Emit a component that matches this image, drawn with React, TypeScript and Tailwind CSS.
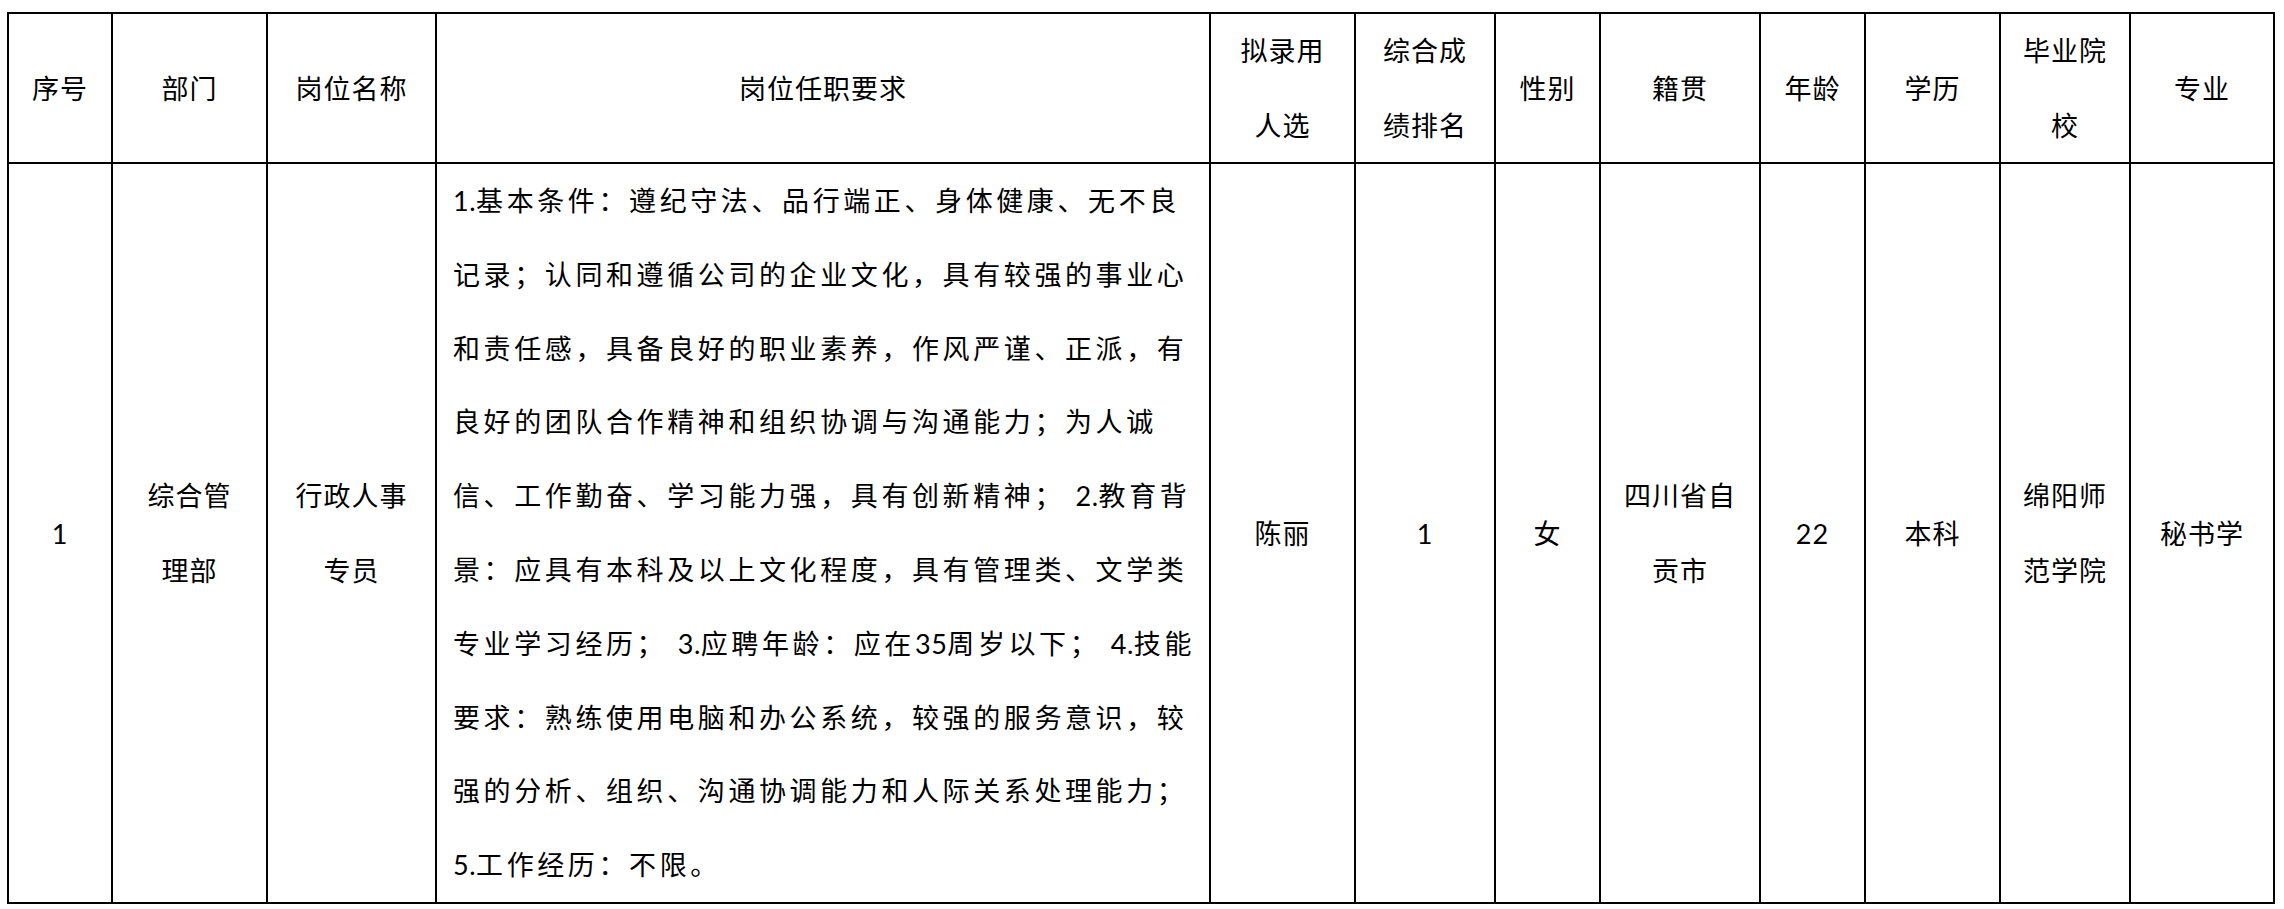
const font = {
  fontFamily: '"Lato", "Noto Sans CJK SC", sans-serif',
};

const headers: string[][] = [
  ["序号"],
  ["部门"],
  ["岗位名称"],
  ["岗位任职要求"],
  ["拟录用", "人选"],
  ["综合成", "绩排名"],
  ["性别"],
  ["籍贯"],
  ["年龄"],
  ["学历"],
  ["毕业院", "校"],
  ["专业"],
];

const requirement = [
  "1.基本条件：遵纪守法、品行端正、身体健康、无不良",
  "记录；认同和遵循公司的企业文化，具有较强的事业心",
  "和责任感，具备良好的职业素养，作风严谨、正派，有",
  "良好的团队合作精神和组织协调与沟通能力；为人诚",
  "信、工作勤奋、学习能力强，具有创新精神； 2.教育背",
  "景：应具有本科及以上文化程度，具有管理类、文学类",
  "专业学习经历； 3.应聘年龄：应在35周岁以下； 4.技能",
  "要求：熟练使用电脑和办公系统，较强的服务意识，较",
  "强的分析、组织、沟通协调能力和人际关系处理能力；",
  "5.工作经历：不限。",
];

const row: string[][] = [
  ["1"],
  ["综合管", "理部"],
  ["行政人事", "专员"],
  [],
  ["陈丽"],
  ["1"],
  ["女"],
  ["四川省自", "贡市"],
  ["22"],
  ["本科"],
  ["绵阳师", "范学院"],
  ["秘书学"],
];

// digits and dots stay tight, like the narrow latin face in the original doc
function Line({ text }: { text: string }) {
  const parts = text.split(/([0-9.]+)/);
  return (
    <div className="whitespace-nowrap">
      {parts.map((p, i) =>
        /^[0-9.]+$/.test(p) ? (
          <span key={i} className="tracking-[0.5px]">
            {p}
          </span>
        ) : (
          <span key={i}>{p}</span>
        )
      )}
    </div>
  );
}

function Cell({ lines }: { lines: string[] }) {
  return (
    <div className="flex items-center justify-center bg-white text-center">
      <div className="leading-[75px]">
        {lines.map((l, i) => (
          <div key={i} className="whitespace-nowrap">
            {l}
          </div>
        ))}
      </div>
    </div>
  );
}

export default function App() {
  return (
    <div className="min-h-screen bg-white pt-[12px] pl-[7px] text-black" style={font}>
      <div className="grid w-[2268px] grid-cols-[102px_153px_167px_772px_143px_138px_103px_158px_103px_133px_128px_142px] grid-rows-[148px_738px] gap-[2px] bg-black p-[2px] text-[27px] tracking-[1px]">
        {headers.map((h, i) => (
          <Cell key={i} lines={h} />
        ))}
        {row.map((r, i) =>
          i === 3 ? (
            <div key={i} className="bg-white pl-[16px] leading-[73.8px] tracking-[3.6px]">
              {requirement.map((l, j) => (
                <Line key={j} text={l} />
              ))}
            </div>
          ) : (
            <Cell key={i} lines={r} />
          )
        )}
      </div>
    </div>
  );
}
